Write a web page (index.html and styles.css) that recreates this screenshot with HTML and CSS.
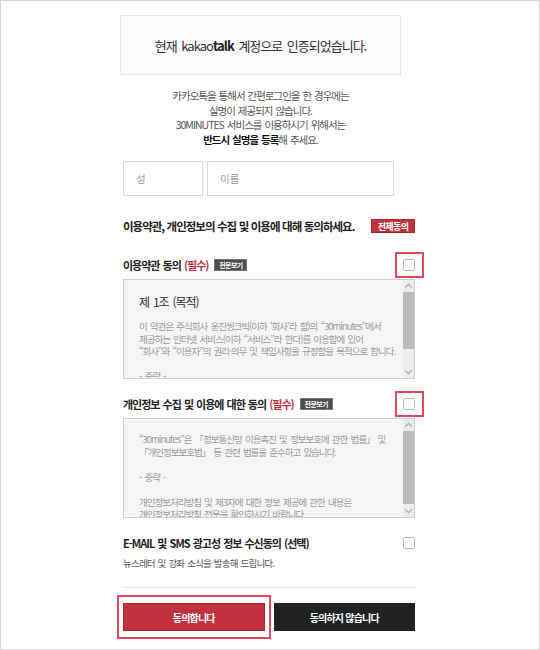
FILE: index.html
```html
<!DOCTYPE html>
<html lang="ko">
<head>
  <meta charset="UTF-8" />
  <meta name="viewport" content="width=device-width, initial-scale=1.0"/>
  <title>30MINUTES 약관동의</title>
  <link rel="stylesheet" href="styles.css">
</head>
<body>
  <div class="page">
    <div class="notice"><span>현재 kakao<b>talk</b> 계정으로 인증되었습니다.</span></div>

    <p class="desc">
      카카오톡을 통해서 간편로그인을 한 경우에는<br>
      실명이 제공되지 않습니다.<br>
      30MINUTES 서비스를 이용하시기 위해서는<br>
      <b>반드시 실명을 등록</b>해 주세요.
    </p>

    <div class="name-row">
      <input type="text" class="field short" placeholder="성" />
      <input type="text" class="field" placeholder="이름" />
    </div>

    <div class="agree-all">
      <h2>이용약관, 개인정보의 수집 및 이용에 대해 동의하세요.</h2>
      <span class="badge red">전체동의</span>
    </div>

    <div class="term-head first">
      <h3>이용약관 동의 <em>(필수)</em></h3>
      <span class="badge gray">전문보기</span>
      <span class="check marked"></span>
    </div>
    <div class="term-box">
      <div class="term-text">
        <h4>제 1조 (목적)</h4>
        <p>이 약관은 주식회사 웅진씽크빅(이하 ‘회사’라 함)의 “30minutes”에서<br>
        제공하는 인터넷 서비스(이하 “서비스”라 한다)를 이용함에 있어<br>
        “회사”와 “이용자”의 권리·의무 및 책임사항을 규정함을 목적으로 합니다.</p>
        <p class="gap">- 중략 -</p>
      </div>
      <div class="scroll">
        <svg class="arrow" viewBox="0 0 10 10"><path d="M2 6.5 5 3.5 8 6.5" /></svg>
        <span class="thumb one"></span>
        <span class="track"></span>
        <svg class="arrow" viewBox="0 0 10 10"><path d="M2 3.5 5 6.5 8 3.5" /></svg>
      </div>
    </div>

    <div class="term-head second">
      <h3>개인정보 수집 및 이용에 대한 동의 <em>(필수)</em></h3>
      <span class="badge gray">전문보기</span>
      <span class="check marked"></span>
    </div>
    <div class="term-box">
      <div class="term-text">
        <p>“30minutes”은 「정보통신망 이용촉진 및 정보보호에 관한 법률」 및<br>
        「개인정보보호법」 등 관련 법률을 준수하고 있습니다.</p>
        <p class="gap">- 중략 -</p>
        <p class="gap">개인정보처리방침 및 제3자에 대한 정보 제공에 관한 내용은<br>
        개인정보처리방침 전문을 확인하시기 바랍니다.</p>
      </div>
      <div class="scroll">
        <svg class="arrow" viewBox="0 0 10 10"><path d="M2 6.5 5 3.5 8 6.5" /></svg>
        <span class="thumb two"></span>
        <span class="track"></span>
        <svg class="arrow" viewBox="0 0 10 10"><path d="M2 3.5 5 6.5 8 3.5" /></svg>
      </div>
    </div>

    <div class="term-head email">
      <h3>E-MAIL 및 SMS 광고성 정보 수신동의 (선택)</h3>
      <span class="check"></span>
    </div>
    <p class="sub">뉴스레터 및 강좌 소식을 발송해 드립니다.</p>

    <div class="buttons">
      <button class="btn agree">동의합니다</button>
      <button class="btn decline">동의하지 않습니다</button>
    </div>
  </div>
</body>
</html>
```

FILE: styles.css
```css
:root {
  --text: #222;
  --muted: #555;
  --line: #e3e3e3;
  --red: #c1323f;
  --mark: #e5475b;
}

* {
  box-sizing: border-box;
}

body {
  margin: 0;
  font-family: "Noto Sans CJK KR", "Liberation Sans", sans-serif;
  color: var(--text);
  background: #fff;
  word-spacing: 1px;
}

.page {
  width: 540px;
  height: 650px;
  border: 1px solid #d4d4d4;
  padding: 14px 0 0 122px;
  overflow: hidden;
}

.page > * {
  width: 292px;
}

.notice {
  width: 281px;
  height: 60px;
  margin-left: -3px;
  border: 1px solid #e6e6e6;
  background: #fafafa;
  display: flex;
  align-items: center;
  justify-content: center;
  font-size: 13px;
  letter-spacing: -1px;
  word-spacing: 2px;
  color: #333;
}

.notice b {
  color: #222;
}

.desc {
  width: 281px;
  margin: 14px 0 0 -3px;
  text-align: center;
  font-size: 10.5px;
  line-height: 14.5px;
  letter-spacing: -1px;
  color: var(--muted);
}

.desc b {
  color: #111;
}

.page > .name-row {
  display: flex;
  gap: 4px;
  width: 271px;
  margin-top: 14px;
}

.field {
  flex: 1;
  min-width: 0;
  height: 35px;
  border: 1px solid #d6d6d6;
  padding: 0 12px;
  font-family: inherit;
  font-size: 10.5px;
  color: var(--text);
  background: #fff;
}

.field.short {
  flex: 0 0 80px;
}

.field::placeholder {
  color: #999;
}

.agree-all {
  display: flex;
  align-items: center;
  justify-content: space-between;
  height: 14px;
  margin-top: 23px;
}

h2, h3, h4 {
  margin: 0;
  font-weight: 700;
  font-size: 11px;
  letter-spacing: -1px;
  color: var(--text);
}

.agree-all h2 {
  font-size: 11.5px;
  word-spacing: 0.3px;
}

.badge {
  display: inline-flex;
  align-items: center;
  justify-content: center;
  color: #fff;
  font-weight: 700;
  letter-spacing: -0.6px;
  word-spacing: 0;
}

.badge.red {
  width: 44px;
  height: 14px;
  background: var(--red);
  border: 1px solid #a82633;
  font-size: 9px;
}

.badge.gray {
  width: 33px;
  height: 12px;
  margin-left: 6px;
  background: #4e4e4e;
  border: 1px solid #777;
  font-size: 7px;
}

.term-head {
  display: flex;
  align-items: center;
  height: 28px;
}

.term-head.first {
  margin-top: 18px;
}

.term-head.second {
  margin-top: 11px;
}

.term-head em {
  font-style: normal;
  color: var(--red);
}

.check {
  position: relative;
  width: 12px;
  height: 12px;
  margin-left: auto;
  border: 1px solid #b8b8b8;
  border-radius: 2px;
  background: #fff;
}

.check.marked::after {
  content: "";
  position: absolute;
  left: -9px;
  right: -10px;
  top: -8px;
  bottom: -8px;
  border: 2px solid var(--mark);
}

.term-box {
  display: flex;
  height: 100px;
  border: 1px solid #cfcfcf;
  background: #f5f5f5;
  overflow: hidden;
}

.term-text {
  flex: 1;
  padding: 14px 0 0 15px;
  font-size: 9.5px;
  line-height: 12.5px;
  letter-spacing: -1px;
  word-spacing: 1.5px;
  color: #9a9a9a;
  white-space: nowrap;
  overflow: hidden;
}

.term-text h4 {
  font-weight: 400;
  font-size: 12px;
  line-height: 16px;
  color: #333;
  margin-bottom: 10px;
}

.term-text p {
  margin: 0;
}

.term-text p.gap {
  margin-top: 12.5px;
}

.scroll {
  flex: 0 0 11px;
  display: flex;
  flex-direction: column;
  background: #ececec;
}

.arrow {
  width: 11px;
  height: 12px;
  fill: none;
  stroke: #a8a8a8;
  stroke-width: 1.2;
}

.thumb {
  background: #bbb;
}

.thumb.one {
  height: 57px;
}

.thumb.two {
  height: 73px;
}

.track {
  flex: 1;
}

.term-head.email {
  height: 14px;
  margin-top: 18px;
}

.sub {
  margin: 6px 0 0;
  font-size: 9.5px;
  line-height: 14px;
  letter-spacing: -0.8px;
  color: var(--muted);
}

.buttons {
  display: flex;
  gap: 9px;
  margin-top: 17px;
  padding-top: 15px;
  border-top: 1px solid var(--line);
}

.btn {
  position: relative;
  flex: 1;
  height: 28px;
  border: 1px solid transparent;
  font-family: inherit;
  font-size: 10px;
  font-weight: 700;
  letter-spacing: -0.8px;
  color: #fff;
}

.btn.agree {
  background: var(--red);
  border-color: #a82633;
}

.btn.agree::after {
  content: "";
  position: absolute;
  left: -7px;
  right: -7px;
  top: -9px;
  bottom: -9px;
  border: 2px solid var(--mark);
}

.btn.decline {
  background: #222;
}
```
